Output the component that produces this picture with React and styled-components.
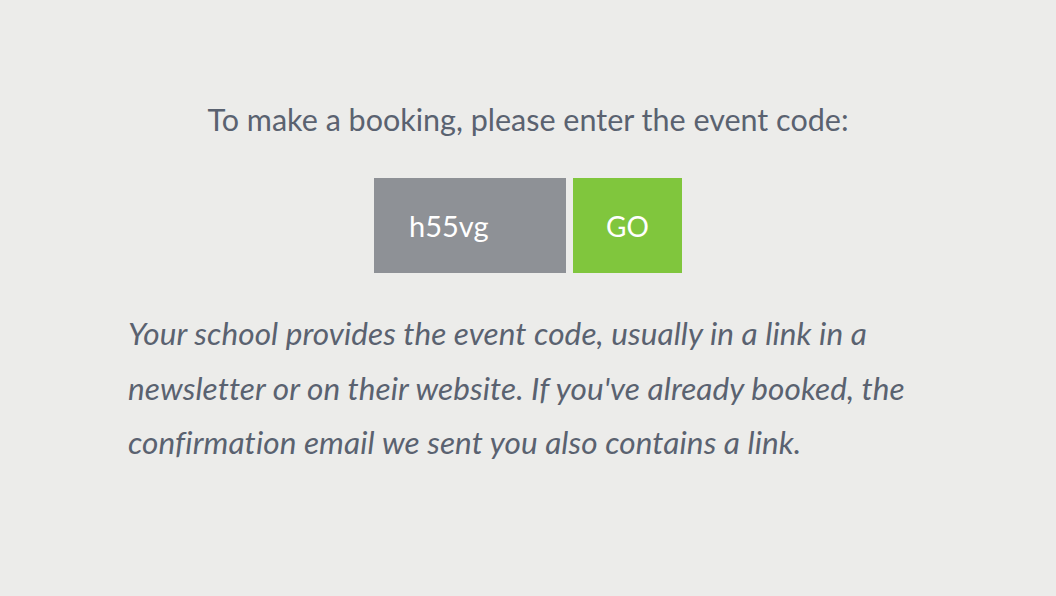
import styled, { createGlobalStyle } from "styled-components";

const GlobalStyle = createGlobalStyle`
    html, body {
        margin: 0;
        padding: 0;
        background-color: #ececea;
    }
    body {
        font-family: Lato, "Liberation Sans", sans-serif;
        color: #5a6270;
    }
`;

const Page = styled.div`
    width: 1056px;
    height: 596px;
    display: flex;
    justify-content: center;
`;

const Content = styled.div`
    width: 800px;
    padding-top: 100px;
    display: flex;
    flex-direction: column;
    align-items: center;
`;

const Heading = styled.p`
    margin: 0;
    font-size: 30.5px;
    line-height: 38px;
    text-align: center;
`;

const CodeForm = styled.form`
    display: flex;
    gap: 7px;
    margin-top: 40px;
`;

const CodeInput = styled.input`
    box-sizing: border-box;
    width: 192px;
    height: 95px;
    border: none;
    outline: none;
    padding: 0 0 0 35px;
    background-color: #8e9196;
    color: #fff;
    font-family: inherit;
    font-size: 29px;
`;

const GoButton = styled.button`
    width: 109px;
    height: 95px;
    border: none;
    padding: 0;
    background-color: #80c63d;
    color: #fff;
    font-family: inherit;
    font-size: 28px;
    cursor: pointer;
`;

const Help = styled.p`
    align-self: stretch;
    margin: 33px 0 0;
    font-size: 31.5px;
    font-style: italic;
    line-height: 54.5px;
    letter-spacing: 0.1px;
`;

function App() {
    return (
        <Page>
            <GlobalStyle />
            <Content>
                <Heading>To make a booking, please enter the event code:</Heading>
                <CodeForm onSubmit={e => e.preventDefault()}>
                    <CodeInput defaultValue="h55vg" />
                    <GoButton type="submit">GO</GoButton>
                </CodeForm>
                <Help>
                    Your school provides the event code, usually in a link in a newsletter or on their website. If you've already booked, the confirmation email we sent you also contains a link.
                </Help>
            </Content>
        </Page>
    );
}

export default App;
